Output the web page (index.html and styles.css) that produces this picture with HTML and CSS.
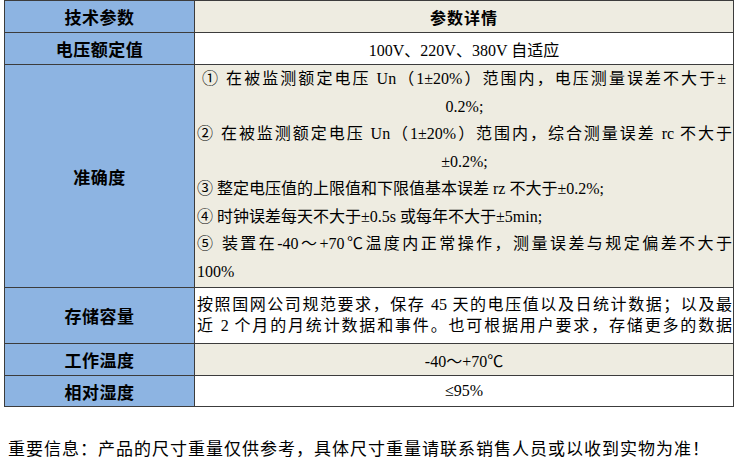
FILE: index.html
```html
<!DOCTYPE html>
<html lang="zh-CN">
<head>
<meta charset="utf-8">
<title>技术参数</title>
<link rel="stylesheet" href="styles.css">
</head>
<body>
<div class="spec">
  <div class="label row-head">技术参数</div>
  <div class="value beige row-head head-title">参数详情</div>

  <div class="label row-1">电压额定值</div>
  <div class="value white row-1 center">100V、220V、380V 自适应</div>

  <div class="label row-acc">准确度</div>
  <div class="value beige row-acc acc">
    <div class="jline inset">① 在被监测额定电压 Un（1±20%）范围内，电压测量误差不大于±</div>
    <div class="tail-center">0.2%;</div>
    <div class="jline">② 在被监测额定电压 Un（1±20%）范围内，综合测量误差 rc 不大于</div>
    <div class="tail-center">±0.2%;</div>
    <div class="line">③ 整定电压值的上限值和下限值基本误差 rz 不大于±0.2%;</div>
    <div class="line">④ 时钟误差每天不大于±0.5s 或每年不大于±5min;</div>
    <div class="jline">⑤ 装置在-40～+70℃温度内正常操作，测量误差与规定偏差不大于</div>
    <div class="line">100%</div>
  </div>

  <div class="label row-store">存储容量</div>
  <div class="value white row-store store">
    <div class="jline">按照国网公司规范要求，保存 45 天的电压值以及日统计数据；以及最</div>
    <div class="jline">近 2 个月的月统计数据和事件。也可根据用户要求，存储更多的数据</div>
  </div>

  <div class="label row-1">工作温度</div>
  <div class="value beige row-1 center">-40～+70℃</div>

  <div class="label row-last">相对湿度</div>
  <div class="value white row-last center">≤95%</div>
</div>

<p class="note">重要信息：产品的尺寸重量仅供参考，具体尺寸重量请联系销售人员或以收到实物为准！</p>
</body>
</html>
```

FILE: styles.css
```css
html, body {
  margin: 0;
  padding: 0;
  background: #ffffff;
}

body {
  width: 750px;
  height: 466px;
  overflow: hidden;
  color: #000;
  font-family: "Liberation Serif", "Noto Sans CJK SC", serif;
}

.spec {
  margin-left: 4px;
  width: 730px;
  box-sizing: border-box;
  display: grid;
  grid-template-columns: 190px 538px;
  border-top: 1px solid #3c3c3c;
  border-left: 1px solid #3c3c3c;
  border-right: 1px solid #3c3c3c;
}

.label,
.value {
  box-sizing: border-box;
  border-bottom: 1px solid #3c3c3c;
}

.label {
  background: #8db4e2;
  border-right: 1px solid #3c3c3c;
  display: flex;
  align-items: center;
  justify-content: center;
  font-family: "Noto Sans CJK SC", sans-serif;
  font-weight: 700;
  font-size: 17px;
  letter-spacing: 0.5px;
}

.value {
  font-size: 16px;
}

.beige { background: #eeece1; }
.white { background: #ffffff; }

.row-head { height: 32px; }
.row-1 { height: 32px; }
.row-acc { height: 223px; }
.row-store { height: 56px; }
.row-last { height: 31px; }

.center {
  display: flex;
  align-items: center;
  justify-content: center;
}

.head-title {
  display: flex;
  align-items: center;
  justify-content: center;
  font-family: "Noto Sans CJK SC", sans-serif;
  font-weight: 700;
  font-size: 16px;
  letter-spacing: 1px;
}

.acc {
  padding: 0 1px 0 2px;
  line-height: 27.5px;
}

.jline {
  text-align: justify;
  text-align-last: justify;
}

.jline.inset {
  padding: 0 6px 0 5px;
}

.tail-center {
  text-align: center;
}

.line {
  text-align: left;
}

.store {
  padding: 6px 1px 0 2px;
  line-height: 21px;
}

.note {
  margin: 31px 0 0 8px;
  font-size: 17px;
  line-height: 24px;
  letter-spacing: 1px;
  font-family: "Liberation Serif", "Noto Sans CJK SC", serif;
}
```
